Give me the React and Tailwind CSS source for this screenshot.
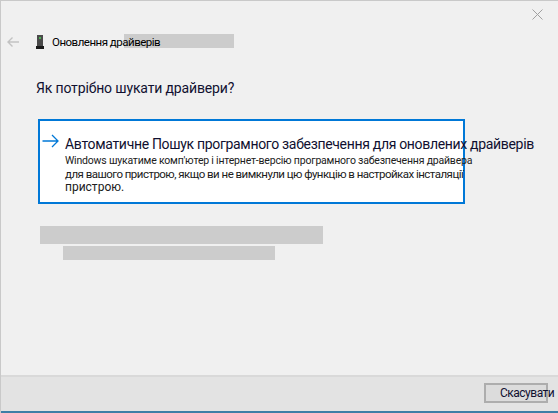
export default function App() {
  return (
    <div className="flex h-[413px] w-[558px] flex-col overflow-hidden border-t border-l border-[#c9c9c9] bg-[#f0f0f0] font-['Roboto',sans-serif] text-black">
      <div className="flex justify-end pt-[8px] pr-[15px]">
        <svg width="11" height="11" viewBox="0 0 11 11" className="text-[#a0a0a0]">
          <path d="M0.5 0.5 L10.5 10.5 M10.5 0.5 L0.5 10.5" stroke="currentColor" strokeWidth="1" fill="none" />
        </svg>
      </div>
      <div className="mt-[14px] flex h-[16px] items-center pl-[6px]">
        <svg width="14" height="12" viewBox="0 0 14 12" className="text-[#c2c2c2]">
          <path d="M12 6 H1 M5.5 1.5 L1 6 L5.5 10.5" stroke="currentColor" strokeWidth="1.4" fill="none" />
        </svg>
        <svg width="8" height="14" viewBox="0 0 8 14" className="ml-[15px]">
          <rect x="1" y="0" width="6" height="11" fill="#4a4a4a" />
          <rect x="3" y="2" width="2" height="2" fill="#4caf50" />
          <rect x="0" y="11" width="8" height="3" fill="#1a1a1a" />
        </svg>
        <div className="relative ml-[8px]">
          <div className="absolute top-[-1px] left-[72px] h-[14px] w-[110px] bg-[#cccccc]" />
          <span className="relative block text-[11.5px] leading-[14px] tracking-[-0.5px] whitespace-nowrap">Оновлення драйверів</span>
        </div>
      </div>
      <h1 className="mt-[28px] pl-[35px] text-[14px] leading-[20px] font-normal tracking-[-0.15px] text-[#101030]">Як потрібно шукати драйвери?</h1>
      <div className="mt-[21px] ml-[37px] h-[85px] w-[427px] border-2 border-[#0078d7] bg-white">
        <div className="flex pt-[13px] pl-[2px]">
          <svg width="17" height="14" viewBox="0 0 17 14" className="shrink-0 text-[#0078d7]">
            <path d="M0.5 7 H16 M10 1 L16 7 L10 13" stroke="currentColor" strokeWidth="1.3" fill="none" />
          </svg>
          <div className="ml-[6px]">
            <div className="text-[14px] leading-[20px] tracking-[-0.32px] whitespace-nowrap text-[#101030]">Автоматичне Пошук програмного забезпечення для оновлених драйверів</div>
            <div className="text-[#202020]">
              <p className="text-[10.5px] leading-[13.5px] tracking-[-0.2px] whitespace-nowrap">Windows шукатиме комп'ютер і інтернет-версію програмного забезпечення драйвера</p>
              <p className="text-[11.5px] leading-[13.5px] tracking-[-0.53px] whitespace-nowrap">для вашого пристрою, якщо ви не вимкнули цю функцію в настройках інсталяції</p>
              <p className="text-[12px] leading-[13.5px] whitespace-nowrap">пристрою.</p>
            </div>
          </div>
        </div>
      </div>
      <div className="mt-[22px] ml-[39px] h-[18px] w-[283px] bg-[#cccccc]" />
      <div className="mt-[2px] ml-[62px] h-[14px] w-[212px] bg-[#cccccc]" />
      <div className="flex-1" />
      <div className="flex h-[36px] items-start justify-end border-t-2 border-[#d9d9d9] bg-[#e3e3e3] pt-[6px] pr-[10px]">
        <button className="h-[20px] w-[64px] border-2 border-[#adadad] bg-[#dcdcdc] pl-[14px] text-left text-[12px] leading-[15px] tracking-[-0.5px] whitespace-nowrap text-[#101030]">Скасувати</button>
      </div>
      <div className="h-[2px] bg-[#3f7ea6]" />
    </div>
  );
}
